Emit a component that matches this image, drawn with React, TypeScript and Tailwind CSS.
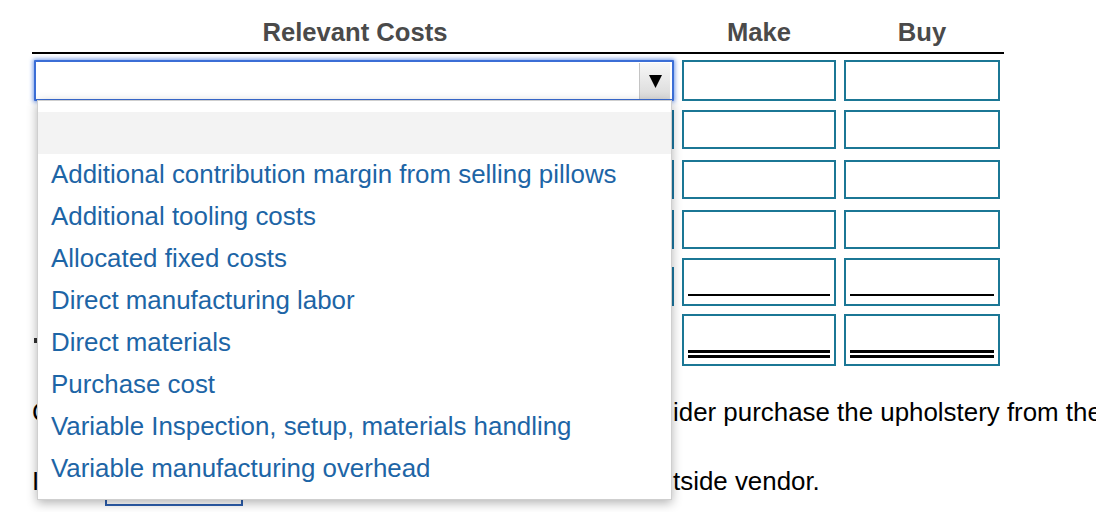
import { useState } from "react";

const options = [
  "",
  "Additional contribution margin from selling pillows",
  "Additional tooling costs",
  "Allocated fixed costs",
  "Direct manufacturing labor",
  "Direct materials",
  "Purchase cost",
  "Variable Inspection, setup, materials handling",
  "Variable manufacturing overhead",
];

function AmountBox({ rule }: { rule?: "single" | "double" }) {
  return (
    <div className="flex h-full flex-col justify-end border-2 border-[#1b7795] bg-white px-[4px] pb-[6px]">
      {rule === "single" && <div className="mb-[2px] h-[2px] bg-black" />}
      {rule === "double" && (
        <div className="flex flex-col gap-[2px]">
          <div className="h-[3px] bg-black" />
          <div className="h-[3px] bg-black" />
        </div>
      )}
    </div>
  );
}

function CostRow({
  className,
  label,
  rule,
}: {
  className: string;
  label: React.ReactNode;
  rule?: "single" | "double";
}) {
  return (
    <div className={`grid grid-cols-[642px_154px_156px] gap-x-[8px] ${className}`}>
      <div className="flex items-end">{label}</div>
      <AmountBox rule={rule} />
      <AmountBox rule={rule} />
    </div>
  );
}

function HiddenSelect() {
  return <div className="ml-[6px] h-[39px] w-[637px] border-2 border-[#1b77a0]" />;
}

export default function App() {
  const [selected, setSelected] = useState(0);

  return (
    <div className="relative h-[512px] w-[1096px] overflow-hidden bg-white font-['Liberation_Sans',Arial,sans-serif] text-[25.9px] leading-[1.15] text-black">
      <div className="ml-[32px] w-[972px]">
        {/* header */}
        <div className="grid h-[54px] grid-cols-[642px_154px_156px] gap-x-[8px] border-b-2 border-black pt-[18px] text-[25.6px] font-bold text-[#4a4a4a]">
          <div className="pl-[4px] text-center">Relevant Costs</div>
          <div className="text-center">Make</div>
          <div className="text-center">Buy</div>
        </div>

        <CostRow
          className="mt-[6px] h-[39px]"
          label={
            <div className="relative ml-[2px] h-[41px] w-[642px] rounded-[1px] border-2 border-[#3b6ed6] bg-white shadow-[0_0_4px_1px_rgba(70,120,225,0.75)]">
              <div className="absolute right-[2px] top-[1px] flex h-[36px] w-[31px] items-center justify-center border-l border-[#c4c4c4] bg-gradient-to-b from-[#f7f7f7] to-[#d9d9d9]">
                <svg width="13" height="13" viewBox="0 0 13 13">
                  <polygon points="0,0 13,0 6.5,13" fill="#000" />
                </svg>
              </div>
            </div>
          }
        />
        <CostRow className="mt-[11px] h-[39px]" label={<HiddenSelect />} />
        <CostRow className="mt-[11px] h-[39px]" label={<HiddenSelect />} />
        <CostRow className="mt-[11px] h-[39px]" label={<HiddenSelect />} />
        <CostRow className="mt-[9px] h-[48px]" rule="single" label={<HiddenSelect />} />
        <CostRow
          className="mt-[8px] h-[52px]"
          rule="double"
          label={
            <div className="flex h-full items-center pl-[2px]">
              <span className="h-[5px] w-[3px] bg-[#333]" />
            </div>
          }
        />
      </div>

      {/* question text behind the open list */}
      <div className="ml-[32px] mt-[32px] flex h-[69px] items-start whitespace-nowrap">
        <span className="inline-block w-[641px] shrink-0 overflow-hidden">
          Considering only relevant costs, should Lazy Boy cons
        </span>
        <span className="shrink-0">ider purchase the upholstery from the</span>
      </div>
      <div className="ml-[32px] flex items-start whitespace-nowrap">
        <span className="inline-block w-[73px] shrink-0 overflow-hidden">It is</span>
        <span className="mt-[-1px] inline-block h-[40px] w-[138px] shrink-0 border-2 border-[#2d5fae]" />
        <span className="inline-block w-[430px] shrink-0 overflow-hidden">better to buy from the ou</span>
        <span className="shrink-0">tside vendor.</span>
      </div>

      {/* open dropdown list */}
      <ul className="absolute left-[37px] top-[100px] h-[400px] w-[635px] border border-[#cfcfcf] bg-white pt-[11px] shadow-[0_3px_10px_rgba(0,0,0,0.3)]">
        {options.map((opt, i) => (
          <li
            key={opt || "blank"}
            onMouseEnter={() => setSelected(i)}
            className={`flex h-[42px] items-center whitespace-nowrap pl-[13px] text-[#1d65a6] ${
              selected === i ? "bg-[#f3f3f3]" : ""
            }`}
          >
            {opt}
          </li>
        ))}
      </ul>
    </div>
  );
}
